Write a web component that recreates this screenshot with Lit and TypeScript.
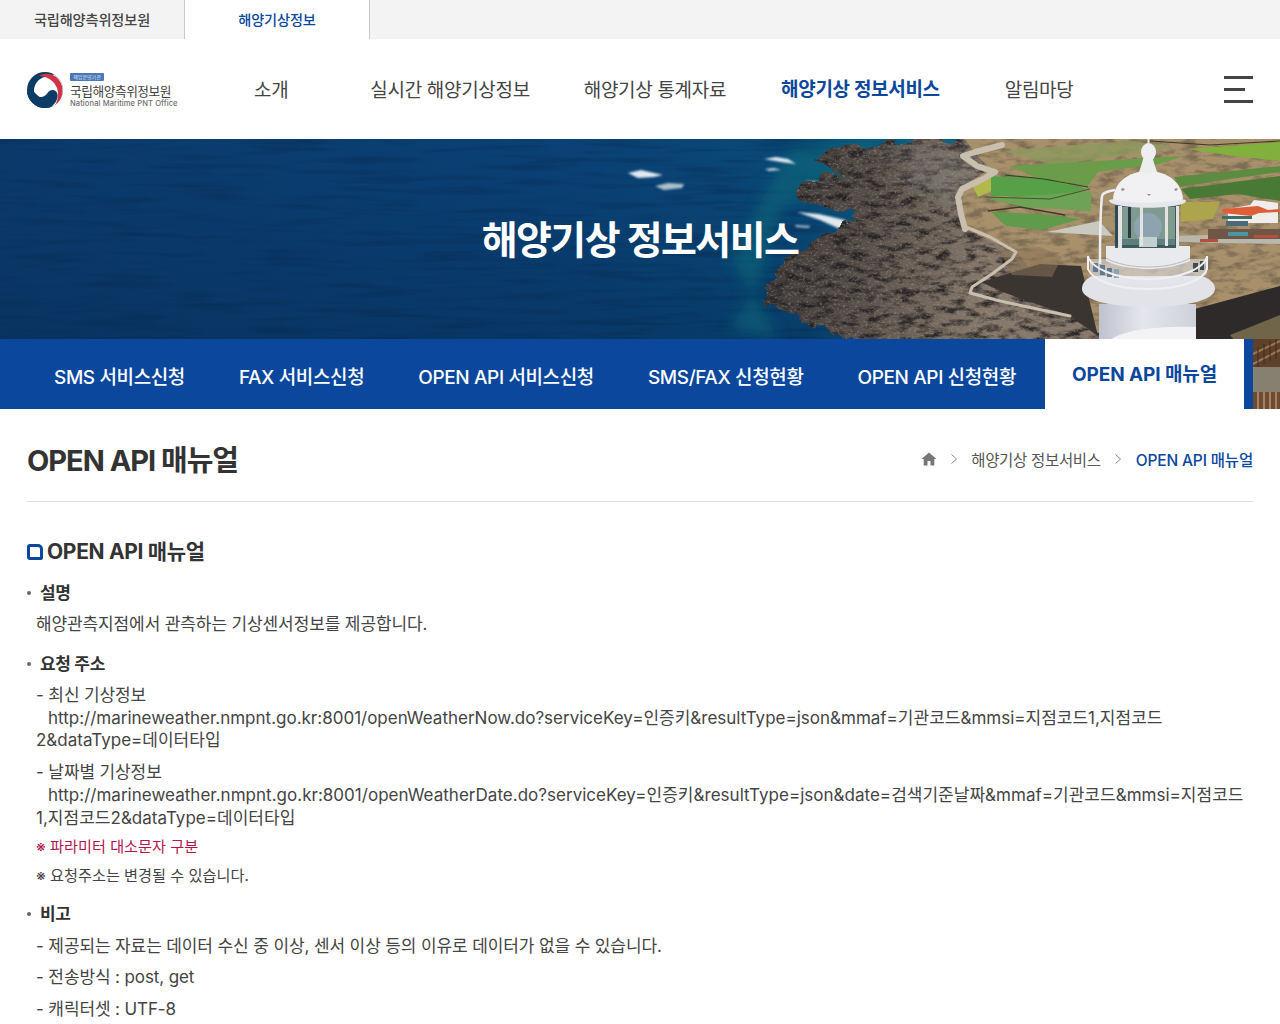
import { html, css, LitElement, svg } from 'lit';
import { customElement } from 'lit/decorators.js';

const GNB = ['소개', '실시간 해양기상정보', '해양기상 통계자료', '해양기상 정보서비스', '알림마당'];
const TABS = ['SMS 서비스신청', 'FAX 서비스신청', 'OPEN API 서비스신청', 'SMS/FAX 신청현황', 'OPEN API 신청현황', 'OPEN API 매뉴얼'];

const COAST = 'M904 0L885 6 845 10 812 20 830 32 850 36 812 40 800 50 795 60 830 66 858 78 835 90 812 100 788 123 760 150 766 163 790 172 809 187 870 205 890 270 1280 270 1280 0z';
const LAND = 'M965 0L1280 0 1280 148 1195 170 1100 195 1070 177 1016 113 965 90 957 63 959 50 990 30 975 14z';

const heroArt = svg`
  <defs>
    <linearGradient id="sea" x1="0" y1="0" x2="1" y2="0">
      <stop offset="0" stop-color="#0b3a6c"/>
      <stop offset="0.45" stop-color="#0a4176"/>
      <stop offset="0.62" stop-color="#0a4a78"/>
      <stop offset="0.72" stop-color="#0b5f7e"/>
    </linearGradient>
    <linearGradient id="seaShade" x1="0" y1="0" x2="0" y2="1">
      <stop offset="0" stop-color="#052c54" stop-opacity="0"/>
      <stop offset="1" stop-color="#04264c" stop-opacity="0.5"/>
    </linearGradient>
    <linearGradient id="tower" x1="0" y1="0" x2="1" y2="0">
      <stop offset="0" stop-color="#bfc2cf"/>
      <stop offset="0.45" stop-color="#e4e6ec"/>
      <stop offset="1" stop-color="#cfd1da"/>
    </linearGradient>
    <linearGradient id="rockTone" gradientUnits="userSpaceOnUse" x1="760" y1="0" x2="1000" y2="40">
      <stop offset="0" stop-color="#3a3839"/>
      <stop offset="0.45" stop-color="#544c47"/>
      <stop offset="1" stop-color="#85786a"/>
    </linearGradient>
    <filter id="ripple" x="0" y="0" width="100%" height="100%" color-interpolation-filters="sRGB">
      <feTurbulence type="fractalNoise" baseFrequency="0.012 0.16" numOctaves="3" seed="4"/>
      <feColorMatrix values="0 0 0 0 0.03  0 0 0 0 0.18  0 0 0 0 0.34  1.600 0 0 0 -0.75"/>
    </filter>
    <filter id="rockDark" x="0" y="0" width="100%" height="100%" color-interpolation-filters="sRGB">
      <feTurbulence type="fractalNoise" baseFrequency="0.06 0.16" numOctaves="5" seed="9"/>
      <feColorMatrix values="0 0 0 0 0.12  0 0 0 0 0.11  0 0 0 0 0.12  3.200 0 0 0 -1.400"/>
    </filter>
    <filter id="rockLight" x="0" y="0" width="100%" height="100%" color-interpolation-filters="sRGB">
      <feTurbulence type="fractalNoise" baseFrequency="0.35 0.45" numOctaves="2" seed="21"/>
      <feColorMatrix values="0 0 0 0 0.66  0 0 0 0 0.6  0 0 0 0 0.54  4 0 0 0 -2.100"/>
    </filter>
    <filter id="edge" x="0" y="0" width="100%" height="100%" color-interpolation-filters="sRGB">
      <feTurbulence type="fractalNoise" baseFrequency="0.05" numOctaves="3" seed="14" result="n"/>
      <feDisplacementMap in="SourceGraphic" in2="n" scale="22" xChannelSelector="R" yChannelSelector="G"/>
    </filter>
    <mask id="coastMask" maskUnits="userSpaceOnUse" x="0" y="0" width="1280" height="270">
      <path d=${COAST} fill="#fff" filter="url(#edge)"/>
    </mask>
    <clipPath id="landClip"><path d=${LAND}/></clipPath>
    <filter id="photo"><feGaussianBlur stdDeviation="0.45"/></filter>
    <filter id="soft"><feGaussianBlur stdDeviation="1"/></filter>
    <filter id="softer"><feGaussianBlur stdDeviation="7"/></filter>
  </defs>
  <rect width="1280" height="270" fill="url(#sea)"/>
  <rect width="1280" height="270" filter="url(#ripple)"/>
  <rect width="1280" height="270" fill="url(#seaShade)"/>
  <path d="M790 10L880 0 850 40 780 70 760 140 730 190 780 200 730 120z" fill="#0f6b7c" filter="url(#softer)" opacity="0.55"/>
  <g fill="#dfe9ee" filter="url(#soft)">
    <path d="M628 34l13-3 22 5-9 2-16 1z"/>
    <path d="M655 47l13-3 16 1-2 4-18 2z" fill="#aebfc9"/>
    <path d="M764 20l12-2 12 2 8 5-15-2z"/>
    <path d="M765 30l9-1 7 2-12 1z" fill="#bcd0da"/>
    <path d="M806 42l14 1 6 2-16 1z"/>
    <path d="M797 73l22 2 26 6 6 9-7 7-4-7-20-9z"/>
    <path d="M795 86l16 1-3 2-12-1z" fill="#a9c4d2"/>
  </g>

  <g mask="url(#coastMask)">
    <rect x="700" width="580" height="270" fill="url(#rockTone)"/>
    <rect x="700" width="580" height="270" filter="url(#rockDark)" opacity="0.85"/>
    <rect x="700" width="580" height="270" filter="url(#rockLight)" opacity="0.4"/>
  </g>
  <path d="M905 8L965 8 975 40 955 70 900 40z" fill="#8c8a86" opacity="0.35" filter="url(#softer)"/>

  <g filter="url(#photo)">
    <path d=${LAND} fill="#a8906b"/>
    <g clip-path="url(#landClip)">
      <rect x="950" width="330" height="200" filter="url(#rockDark)" opacity="0.3"/>
      <rect x="950" width="330" height="200" filter="url(#rockLight)" opacity="0.25"/>
    </g>
    <path d="M981 143L1040 125 1081 127 1098 197 1070 177 1000 152z" fill="#3b3533"/>
    <path d="M1195 170L1280 147 1280 205 1210 205 1195 200z" fill="#2e2a2c"/>
    <path d="M1230 196L1280 176 1280 208 1240 208z" fill="#8d7f55" opacity="0.7"/>
    <path d="M1000 112l40-4 22 10-10 20-40-2z" fill="#8a7254" opacity="0.55"/>

    <path d="M1003 12l70-6 60-4 40 6-30 6-90 12z" fill="#8d9a5e" opacity="0.8"/>
    <path d="M1009 27L1184 17 1159 25 1098 33 1088 47 1035 38z" fill="#6a9c48"/>
    <path d="M991 37L1044 40 1088 50 1052 57 991 57z" fill="#56a046"/>
    <path d="M973 48L991 38 991 52 978 58z" fill="#b2b84a"/>
    <path d="M988 60L1091 52 1091 72 1024 68z" fill="#6ea356"/>
    <path d="M991 73L1040 75 1081 80 1041 91 1006 87z" fill="#5e9b4c"/>
    <path d="M1005 36L1044 40 1088 48" fill="none" stroke="#2a4a22" stroke-width="1.200"/>
    <path d="M985 58L1050 60 1090 50" fill="none" stroke="#3a5a2a" stroke-width="1"/>
    <path d="M988 72L1020 68 1065 76" fill="none" stroke="#3e3c26" stroke-width="1.500"/>
    <path d="M1047 93L1099 82 1113 97z" fill="#c9c9c0"/>
    <path d="M1188 10L1280 3 1280 22 1234 17z" fill="#82b03c"/>
    <path d="M1174 38L1280 27 1280 33 1230 40 1180 48z" fill="#5c8c3f"/>
    <path d="M1181 50L1280 37 1280 62 1238 55 1190 60z" fill="#487a34"/>
    <path d="M1181 63L1220 63 1213 80 1181 83z" fill="#ada54c"/>
    <path d="M1150 2L1210 6 1280 2" fill="none" stroke="#3a3a22" stroke-width="1"/>
    <path d="M1170 97L1280 94 1280 105 1180 103z" fill="#b9b6ac"/>
    <g>
      <path d="M1228 70l22-4 4-5 10 1 14 2v20h-50z" fill="#f0eeea"/>
      <path d="M1222 70l36-3 10 4 12-1-1 3-20 1-8 3-28-3z" fill="#dd5f38"/>
      <rect x="1222" y="77" width="30" height="3" fill="#3d6e6a"/>
      <rect x="1226" y="82" width="22" height="5" fill="#4c6b78"/>
      <path d="M1208 90h72v10h-72z" fill="#6f5646"/>
      <path d="M1228 93h20v4h-20z" fill="#4a96a6"/>
      <path d="M1254 96h24v3h-24zM1200 100h18v3h-18z" fill="#b3503c"/>
    </g>
    <g fill="none" stroke="#c8bfae" stroke-linejoin="round" stroke-linecap="round">
      <path d="M1002 6L975 13 963 17 977 27 995 33 983 40 962 50 958 58 961 75 965 90" stroke-width="6"/>
      <path d="M966 88L990 98 1016 113 1012 120 992 135 972 148 970 154 1000 162 1070 177" stroke-width="3"/>
    </g>

    <path d="M1253 200h27v28h-27z" fill="#5e3f2b"/>
    <path d="M1253 215l27-13M1253 225l27-14" stroke="#9b7657" stroke-width="2"/>
    <path d="M1258 208v20M1264 205v20M1270 202v20M1276 200v20" stroke="#3d2a1e" stroke-width="1"/>
    <path d="M1253 228h27v25h-27z" fill="#85806f"/>
    <path d="M1253 253h27v17h-27z" fill="#6e4b33"/>
    <path d="M1258 253v17M1264 253v17M1270 253v17M1276 253v17" stroke="#b79372" stroke-width="1.500"/>
  </g>

  <g>
    <rect x="1099" y="165" width="97" height="40" fill="url(#tower)"/>
    <path d="M1107 205c8-14 50-18 89-17v17z" fill="#f3f3f6"/>
    <path d="M1082 150c0-6 4-10 10-13h110c8 3 13 7 13 13 0 11-30 18-67 18s-66-7-66-18z" fill="#e2e3e9"/>
    <path d="M1090 120v15c6 7 28 11 58 11s52-4 59-11v-15" fill="#e6e7ec" fill-opacity="0.55"/>
    <path d="M1106 107h84v15c-14 6-30 8-42 8s-30-2-42-8z" fill="#e9eaee"/>
    <path d="M1106 119c10 6 26 9 42 9s32-3 42-9" fill="none" stroke="#b8bac3" stroke-width="1"/>
    <g fill="#5f7a92">
      <rect x="1093" y="124" width="5" height="9"/>
      <rect x="1100" y="126" width="5" height="10"/>
      <rect x="1107" y="129" width="5" height="9"/>
      <rect x="1114" y="130" width="5" height="9" fill="#8ea2b5"/>
      <rect x="1193" y="124" width="5" height="9" fill="#3f4a52"/>
      <rect x="1200" y="122" width="4" height="9" fill="#3f4a52"/>
    </g>
    <path d="M1088 118c4 10 24 22 60 22 36 0 56-12 59-22" fill="none" stroke="#eef0f4" stroke-width="2"/>
    <path d="M1088 130c4 10 24 20 60 20 36 0 56-10 59-20" fill="none" stroke="#eef0f4" stroke-width="2"/>
    <path d="M1088 117v14M1207 117v14" stroke="#eef0f4" stroke-width="2"/>
    <rect x="1115" y="66" width="64" height="43" fill="#3f5a5e"/>
    <path d="M1120 68h55v36h-55z" fill="#7f9a8e"/>
    <path d="M1120 100h55v6h-55z" fill="#5e7f80"/>
    <circle cx="1148" cy="88" r="14" fill="#8ea3b0"/>
    <rect x="1139" y="98" width="18" height="10" fill="#c2d0d2"/>
    <g fill="#e3e3e1">
      <rect x="1118" y="67" width="4" height="42"/>
      <rect x="1140" y="67" width="3" height="40"/>
      <rect x="1165" y="67" width="3" height="40"/>
      <rect x="1176" y="67" width="3" height="42"/>
    </g>
    <rect x="1115" y="67" width="3" height="40" fill="#2c4a58"/>
    <rect x="1128" y="67" width="3" height="32" fill="#28393f"/>
    <path d="M1109 61c18-4 59-4 77 0 0 2-1 3-4 4-16 5-52 5-68 0-3-1-5-2-5-4z" fill="#e6e7ec"/>
    <path d="M1113 60c1-16 15-28 35-28s34 12 35 28c-14 5-56 5-70 0z" fill="#f1f1f4"/>
    <path d="M1139 33l3-9 1-4h10l1 4 3 9c-5 2-13 2-18 0z" fill="#eceded"/>
    <ellipse cx="1148.500" cy="13" rx="7.500" ry="9" fill="#eeeef2"/>
    <path d="M1148.500 0v5" stroke="#e5e5ea" stroke-width="2"/>
    <g fill="#8a8c90">
      <path d="M1122 49l3 1-2 2-2-1zM1176 49l2 1-2 2-2-1z"/>
      <path d="M1147 55l4 0-2 2z"/>
    </g>
    <path d="M1115 51c-6 1-12 2-13 6-2 18-2 40-2 68" fill="none" stroke="#eceef2" stroke-width="2.500"/>
  </g>
`;

@customElement('app-root')
export class AppRoot extends LitElement {
  static styles = css`
    :host {
      display: block;
      height: 1024px;
      overflow: hidden;
      background: #fff;
      color: #333;
      font-family: Inter, 'Noto Sans CJK KR', 'Noto Sans', sans-serif;
      letter-spacing: -0.02em;
    }

    .top {
      display: flex;
      height: 39px;
      background: #f3f3f3;
    }

    .top a {
      display: flex;
      align-items: center;
      justify-content: center;
      box-sizing: border-box;
      width: 184px;
      padding-bottom: 1px;
      font-size: 14.2px;
      font-weight: 500;
      color: #444;
      letter-spacing: -0.01em;
    }

    .top a.on {
      background: #fff;
      color: #0b479d;
      border-left: 1px solid #c8c8c8;
      border-right: 1px solid #c8c8c8;
      box-sizing: content-box;
    }

    .head {
      display: flex;
      align-items: center;
      height: 100px;
      padding: 0 27px;
      box-sizing: border-box;
    }

    .logo {
      display: flex;
      align-items: center;
      gap: 7px;
      width: 227px;
      flex: none;
    }

    .logo svg {
      margin-top: 2px;
      flex: none;
    }

    .logo-text {
      display: flex;
      flex-direction: column;
      width: 115px;
      padding-top: 1px;
    }

    .logo-tag {
      width: 34px;
      height: 8px;
      border-radius: 1px;
      background: #4b77b8;
      color: #dfe8f5;
      font-size: 5px;
      line-height: 8px;
      text-align: center;
      letter-spacing: 0;
    }

    .logo-name {
      margin-top: 4px;
      font-size: 12.7px;
      line-height: 14px;
      color: #3c3c3c;
      letter-spacing: -0.035em;
      white-space: nowrap;
    }

    .logo-en {
      font-size: 7.6px;
      line-height: 7px;
      margin-top: 1px;
      font-weight: 500;
      color: #6e6e70;
      white-space: nowrap;
      letter-spacing: 0.01em;
    }

    .gnb {
      display: flex;
      flex: 1;
      align-items: center;
      padding-top: 4px;
    }

    .gnb a {
      font-size: 19px;
      line-height: 24px;
      color: #444;
      white-space: nowrap;
    }

    .gnb a:nth-child(1) { margin-right: 82px; }
    .gnb a:nth-child(2) { margin-right: 54px; }
    .gnb a:nth-child(3) { margin-right: 55px; }
    .gnb a:nth-child(4) { margin-right: 65px; color: #0b479d; font-weight: 700; transform: translateY(-1px); }

    .burger {
      display: grid;
      gap: 9px;
      width: 29px;
      flex: none;
      padding-top: 1px;
    }

    .burger i {
      display: block;
      height: 3px;
      background: #444;
    }

    .burger i:nth-child(2) {
      width: 21px;
    }

    .hero {
      position: relative;
      display: flex;
      flex-direction: column;
      height: 270px;
      overflow: hidden;
      background: #0b4a7c;
    }

    .hero-art {
      position: absolute;
      inset: 0;
      width: 100%;
      height: 100%;
    }

    .hero h1 {
      position: relative;
      display: flex;
      align-items: center;
      justify-content: center;
      box-sizing: border-box;
      height: 200px;
      margin: 0;
      padding-bottom: 5px;
      font-size: 39px;
      font-weight: 700;
      color: #fff;
      letter-spacing: -0.04em;
    }

    .tabs {
      position: relative;
      display: flex;
      width: 1253px;
      height: 70px;
      box-sizing: border-box;
      padding: 0 9px 0 27px;
      background: #0b479d;
    }

    .tabs a {
      display: flex;
      align-items: center;
      padding: 2px 27px 0;
      font-size: 19px;
      font-weight: 500;
      color: #fff;
      letter-spacing: -0.02em;
      white-space: nowrap;
    }

    .tabs a.on {
      background: #fff;
      color: #0b479d;
      font-weight: 700;
      margin-left: 2px;
      padding: 0 27px 4px;
      box-sizing: border-box;
      height: 70px;
      letter-spacing: -0.005em;
    }

    .main {
      padding: 0 27px;
    }

    .title {
      display: flex;
      align-items: center;
      justify-content: space-between;
      height: 93px;
      border-bottom: 1px solid #dcdcdc;
      box-sizing: border-box;
      padding-top: 6px;
    }

    .title h2 {
      margin: 0;
      font-size: 29px;
      font-weight: 700;
      color: #333;
      letter-spacing: -0.035em;
    }

    .crumb {
      display: flex;
      align-items: center;
      padding-top: 1px;
      font-size: 15.5px;
      color: #555;
    }

    .crumb svg {
      display: block;
      flex: none;
    }

    .crumb .home { margin-right: 13px; }
    .crumb .sep { margin-right: 13px; }
    .crumb span { margin-right: 13px; }
    .crumb .sep2 { margin-right: 14px; }
    .crumb b {
      font-weight: 500;
      color: #0b479d;
      letter-spacing: -0.01em;
    }

    .sec {
      display: flex;
      align-items: center;
      gap: 4px;
      margin: 36px 0 0;
      font-size: 21px;
      line-height: 28px;
      font-weight: 700;
      color: #333;
    }

    .sec i {
      display: block;
      box-sizing: border-box;
      width: 16px;
      height: 16px;
      border: 3px solid #0b479d;
      border-radius: 3px 5px 2px 3px;
      flex: none;
    }

    .lab {
      position: relative;
      margin: 15px 0 0;
      padding-left: 13px;
      font-size: 17px;
      line-height: 24px;
      font-weight: 700;
      color: #333;
    }

    .lab::before {
      content: '';
      position: absolute;
      left: 0;
      top: 10px;
      width: 4px;
      height: 4px;
      border-radius: 50%;
      background: #666;
    }

    .txt {
      margin: 8px 0 0 9px;
      font-size: 17px;
      line-height: 22.8px;
      color: #444;
      letter-spacing: 0;
    }

    .txt.url {
      margin-top: 9px;
    }

    .txt.url .wide {
      letter-spacing: 0.02px;
    }

    .ko {
      letter-spacing: -0.12px;
    }

    .ind {
      display: inline-block;
      width: 12px;
    }

    .note {
      margin: 6px 0 0 9px;
      font-size: 15.2px;
      line-height: 23px;
      color: #444;
      letter-spacing: 0;
    }

    .note.red {
      margin-top: 5px;
      color: #b5134f;
    }

    .lab.gap { margin-top: 16px; }
    .lab.gap2 { margin-top: 15px; }
    .txt.tight { margin-top: 9px; }
  `;

  render() {
    return html`
      <div class="top">
        <a>국립해양측위정보원</a>
        <a class="on">해양기상정보</a>
      </div>
      <header class="head">
        <div class="logo">
          <svg width="36" height="36" viewBox="0 0 36 36">
            <defs><clipPath id="disc"><circle cx="18" cy="18" r="18"/></clipPath></defs>
            <g clip-path="url(#disc)">
              <rect width="36" height="36" fill="#0c3b66"/>
              <path d="M7 20C6.500 12 12 6 18 5L36 0V36H24z" fill="#fff"/>
              <path d="M7 20C9 26 17 27 20.500 21 23 17 29 17 30.500 22 31.500 27 28 32 23 36H0V20z" fill="#0c3b66"/>
              <path d="M12 4C20-1 32 3 35 14 37 23 33 30 28 33.500 31 28 32 22 30 16 27 8 19 4 12 4z" fill="#cf3448"/>
            </g>
          </svg>
          <div class="logo-text">
            <div class="logo-tag">책임운영기관</div>
            <div class="logo-name">국립해양측위정보원</div>
            <div class="logo-en">National Maritime PNT Office</div>
          </div>
        </div>
        <nav class="gnb">${GNB.map((g) => html`<a>${g}</a>`)}</nav>
        <div class="burger"><i></i><i></i><i></i></div>
      </header>
      <section class="hero">
        <svg class="hero-art" viewBox="0 0 1280 270" preserveAspectRatio="none">${heroArt}</svg>
        <h1>해양기상 정보서비스</h1>
        <div class="tabs">
          ${TABS.map((t, i) => html`<a class=${i === 5 ? 'on' : ''}>${t}</a>`)}
        </div>
      </section>
      <main class="main">
        <div class="title">
          <h2>OPEN API 매뉴얼</h2>
          <div class="crumb">
            <svg class="home" width="16" height="14" viewBox="0 0 16 14"><path d="M8 0.500L0.500 7h2.200v6.500h3.800V9h3v4.500h3.800V7h2.200z" fill="#777"/></svg>
            <svg class="sep" width="8" height="12" viewBox="0 0 8 12"><path d="M1.500 1.500L6.500 6l-5 4.500" fill="none" stroke="#888" stroke-width="1"/></svg>
            <span>해양기상 정보서비스</span>
            <svg class="sep2" width="8" height="12" viewBox="0 0 8 12"><path d="M1.500 1.500L6.500 6l-5 4.500" fill="none" stroke="#888" stroke-width="1"/></svg>
            <b>OPEN API 매뉴얼</b>
          </div>
        </div>
        <h3 class="sec"><i></i>OPEN API 매뉴얼</h3>
        <div class="lab">설명</div>
        <p class="txt ko">해양관측지점에서 관측하는 기상센서정보를 제공합니다.</p>
        <div class="lab gap">요청 주소</div>
        <p class="txt"><span class="ko">- 최신 기상정보</span><br><span class="ind"></span>http://marineweather.nmpnt.go.kr:8001/openWeatherNow.do?serviceKey=인증키&resultType=json&mmaf=기관코드&mmsi=지점코드1,지점코드2&dataType=데이터타입</p>
        <p class="txt url"><span class="ko">- 날짜별 기상정보</span><br><span class="ind"></span><span class="wide">http://marineweather.nmpnt.go.kr:8001/openWeatherDate.do?serviceKey=인증키&resultType=json&date=검색기준날짜&mmaf=기관코드&mmsi=지점코드1,지점코드2&dataType=데이터타입</span></p>
        <p class="note red">※ 파라미터 대소문자 구분</p>
        <p class="note">※ 요청주소는 변경될 수 있습니다.</p>
        <div class="lab gap2">비고</div>
        <p class="txt tight ko">- 제공되는 자료는 데이터 수신 중 이상, 센서 이상 등의 이유로 데이터가 없을 수 있습니다.</p>
        <p class="txt tight ko">- 전송방식 : post, get</p>
        <p class="txt tight ko">- 캐릭터셋 : UTF-8</p>
      </main>
    `;
  }
}

declare global {
  interface HTMLElementTagNameMap {
    'app-root': AppRoot;
  }
}
